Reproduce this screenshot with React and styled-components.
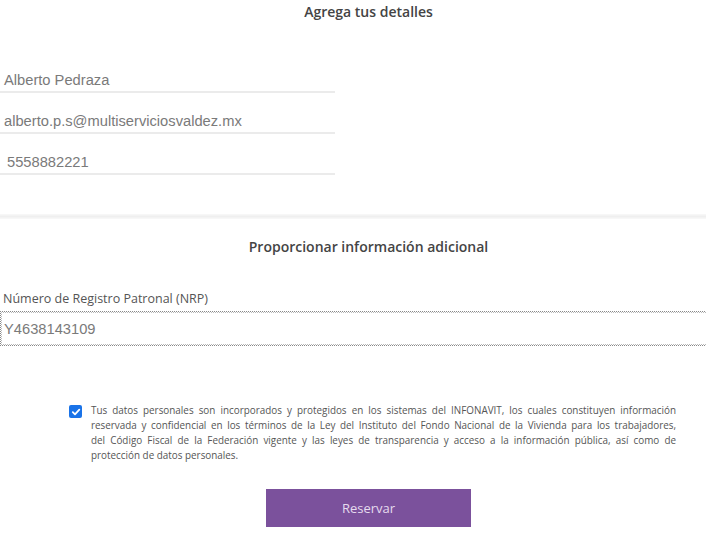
import React from "react";
import styled, { createGlobalStyle } from "styled-components";

const Global = createGlobalStyle`
  html, body { margin: 0; padding: 0; background: #fff; overflow: hidden; }
  body { width: 706px; height: 536px; }
`;

const Page = styled.div`
  width: 737px;
  display: flex;
  flex-direction: column;
  font-family: "Open Sans", "Noto Sans", sans-serif;
`;

const Title = styled.h2`
  margin: 0;
  height: ${(p) => p.$h}px;
  padding-top: ${(p) => p.$top}px;
  box-sizing: border-box;
  text-align: center;
  font-size: 14px;
  font-weight: 600;
  color: #444;
  line-height: 20px;
`;

const Fields = styled.div`
  width: 335px;
  display: flex;
  flex-direction: column;
  padding-top: 28px;
`;

const Field = styled.div`
  height: 41px;
  border-bottom: 2px solid #ebebeb;
  display: flex;
  align-items: flex-end;
  padding-left: ${(p) => p.$indent}px;
  padding-bottom: 3px;
  box-sizing: border-box;
  font-family: "Liberation Sans", Arial, sans-serif;
  font-size: 14.7px;
  color: #7a7a7a;
`;

const Divider = styled.div`
  margin-top: 39px;
  height: 5px;
  background: linear-gradient(#f9f9f9, #efefef 50%, #f9f9f9);
  width: 706px;
`;

const Label = styled.div`
  padding-left: 3px;
  font-size: 12.5px;
  color: #555;
  height: 22px;
  line-height: 20px;
`;

const BoxInput = styled.div`
  height: 35px;
  box-sizing: border-box;
  border: 1px dotted #888;
  outline: 1px dotted #bbb;
  outline-offset: -2px;
  display: flex;
  align-items: center;
  padding-left: 3px;
  font-family: "Liberation Sans", Arial, sans-serif;
  font-size: 14.7px;
  color: #7a7a7a;
`;

const Consent = styled.div`
  margin-top: 57px;
  padding-left: 69px;
  display: flex;
  gap: 9px;
  align-items: flex-start;
`;

const Check = styled.span`
  flex: none;
  width: 13px;
  height: 13px;
  margin-top: 2px;
  border-radius: 2px;
  background: #1a73e8;
  display: flex;
  align-items: center;
  justify-content: center;
`;

const Legal = styled.div`
  width: 585px;
  font-size: 9.9px;
  line-height: 15px;
  color: #555;
`;

const Line = styled.span`
  display: block;
  white-space: nowrap;
  text-align: ${(p) => (p.$last ? "left" : "justify")};
  text-align-last: ${(p) => (p.$last ? "left" : "justify")};
`;

const Actions = styled.div`
  margin-top: 26px;
  display: flex;
  justify-content: center;
`;

const Button = styled.button`
  width: 205px;
  height: 38px;
  border: none;
  background: #7b519c;
  color: #e6dbee;
  font-family: "Open Sans", "Noto Sans", sans-serif;
  font-size: 13px;
  cursor: pointer;
`;

const legalLines = [
  "Tus datos personales son incorporados y protegidos en los sistemas del INFONAVIT, los cuales constituyen información",
  "reservada y confidencial en los términos de la Ley del Instituto del Fondo Nacional de la Vivienda para los trabajadores,",
  "del Código Fiscal de la Federación vigente y las leyes de transparencia y acceso a la información pública, así como de",
  "protección de datos personales.",
];

export default function App() {
  return (
    <>
      <Global />
      <Page>
        <Title $h={24} $top={2}>Agrega tus detalles</Title>
        <Fields>
          <Field $indent={4}>Alberto Pedraza</Field>
          <Field $indent={4}>alberto.p.s@multiserviciosvaldez.mx</Field>
          <Field $indent={7}>5558882221</Field>
        </Fields>
        <Divider />
        <Title $h={70} $top={18}>Proporcionar información adicional</Title>
        <Label>Número de Registro Patronal (NRP)</Label>
        <BoxInput>Y4638143109</BoxInput>
        <Consent>
          <Check>
            <svg width="10" height="10" viewBox="0 0 10 10">
              <path d="M1.8 5.2 L4 7.3 L8.3 2.6" fill="none" stroke="#fff" strokeWidth="1.8" strokeLinecap="round" strokeLinejoin="round" />
            </svg>
          </Check>
          <Legal>
            {legalLines.map((l, i) => (
              <Line key={i} $last={i === legalLines.length - 1}>{l}</Line>
            ))}
          </Legal>
        </Consent>
        <Actions>
          <Button>Reservar</Button>
        </Actions>
      </Page>
    </>
  );
}
